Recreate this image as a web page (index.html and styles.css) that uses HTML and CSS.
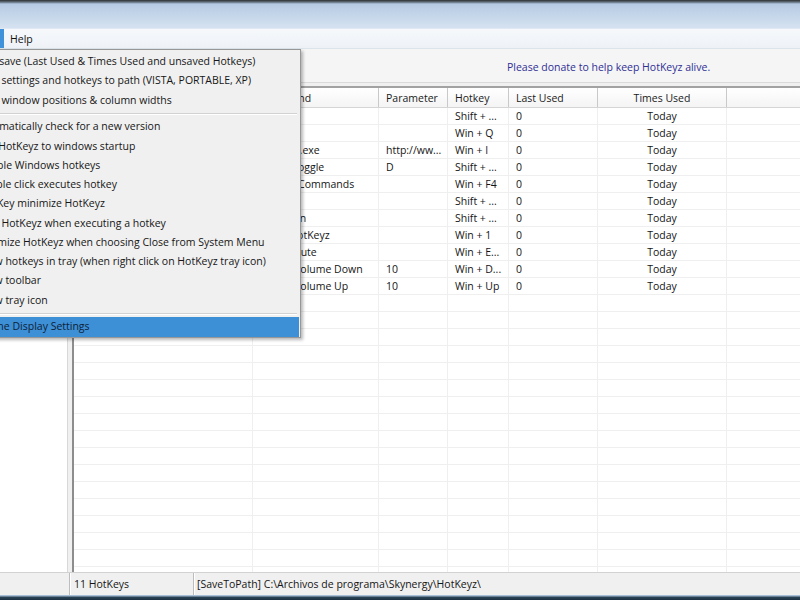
FILE: index.html
```html
<!DOCTYPE html>
<html>
<head>
<meta charset="utf-8">
<title>HotKeyz</title>
<link rel="stylesheet" href="styles.css">
</head>
<body>
<div class="screen">
  <div class="titlebar"></div>
  <div class="menubar">
    <span class="mb-item mb-open">Options</span>
    <span class="mb-item">Help</span>
  </div>
  <div class="toolbar"><span class="donate">Please donate to help keep HotKeyz alive.</span></div>
  <div class="workspace">
    <div class="leftpane"></div>
    <div class="splitter"></div>
    <div class="list">
      <div class="lv-head">
        <div class="hc">Name</div>
        <div class="hc">Command</div>
        <div class="hc">Parameter</div>
        <div class="hc">Hotkey</div>
        <div class="hc">Last Used</div>
        <div class="hc hc-center">Times Used</div>
        <div class="hc"></div>
      </div>
      <div class="lv-body">
        <div class="row"><div class="c">Google Search</div><div class="c">Run</div><div class="c"></div><div class="c">Shift + ...</div><div class="c">0</div><div class="c c-center">Today</div><div class="c"></div></div>
        <div class="row"><div class="c">Quit HotKeyz</div><div class="c">Exit</div><div class="c"></div><div class="c">Win + Q</div><div class="c">0</div><div class="c c-center">Today</div><div class="c"></div></div>
        <div class="row"><div class="c">Internet Explorer</div><div class="c">iexplore.exe</div><div class="c">http://ww...</div><div class="c">Win + I</div><div class="c">0</div><div class="c c-center">Today</div><div class="c"></div></div>
        <div class="row"><div class="c">Show Desktop</div><div class="c">Hover Toggle</div><div class="c">D</div><div class="c">Shift + ...</div><div class="c">0</div><div class="c c-center">Today</div><div class="c"></div></div>
        <div class="row"><div class="c">Close Window</div><div class="c">System Commands</div><div class="c"></div><div class="c">Win + F4</div><div class="c">0</div><div class="c c-center">Today</div><div class="c"></div></div>
        <div class="row"><div class="c">Minimize</div><div class="c">Min</div><div class="c"></div><div class="c">Shift + ...</div><div class="c">0</div><div class="c c-center">Today</div><div class="c"></div></div>
        <div class="row"><div class="c">Tray Icon</div><div class="c">Hide Icon</div><div class="c"></div><div class="c">Shift + ...</div><div class="c">0</div><div class="c c-center">Today</div><div class="c"></div></div>
        <div class="row"><div class="c">HotKeyz</div><div class="c">Show HotKeyz</div><div class="c"></div><div class="c">Win + 1</div><div class="c">0</div><div class="c c-center">Today</div><div class="c"></div></div>
        <div class="row"><div class="c">Mute</div><div class="c">Audio Mute</div><div class="c"></div><div class="c">Win + E...</div><div class="c">0</div><div class="c c-center">Today</div><div class="c"></div></div>
        <div class="row"><div class="c">Volume Down</div><div class="c">Sound Volume Down</div><div class="c">10</div><div class="c">Win + D...</div><div class="c">0</div><div class="c c-center">Today</div><div class="c"></div></div>
        <div class="row"><div class="c">Volume Up</div><div class="c">Sound Volume Up</div><div class="c">10</div><div class="c">Win + Up</div><div class="c">0</div><div class="c c-center">Today</div><div class="c"></div></div>
        <div class="row"><div class="c"></div><div class="c"></div><div class="c"></div><div class="c"></div><div class="c"></div><div class="c"></div><div class="c"></div></div>
        <div class="row"><div class="c"></div><div class="c"></div><div class="c"></div><div class="c"></div><div class="c"></div><div class="c"></div><div class="c"></div></div>
        <div class="row"><div class="c"></div><div class="c"></div><div class="c"></div><div class="c"></div><div class="c"></div><div class="c"></div><div class="c"></div></div>
        <div class="row"><div class="c"></div><div class="c"></div><div class="c"></div><div class="c"></div><div class="c"></div><div class="c"></div><div class="c"></div></div>
        <div class="row"><div class="c"></div><div class="c"></div><div class="c"></div><div class="c"></div><div class="c"></div><div class="c"></div><div class="c"></div></div>
        <div class="row"><div class="c"></div><div class="c"></div><div class="c"></div><div class="c"></div><div class="c"></div><div class="c"></div><div class="c"></div></div>
        <div class="row"><div class="c"></div><div class="c"></div><div class="c"></div><div class="c"></div><div class="c"></div><div class="c"></div><div class="c"></div></div>
        <div class="row"><div class="c"></div><div class="c"></div><div class="c"></div><div class="c"></div><div class="c"></div><div class="c"></div><div class="c"></div></div>
        <div class="row"><div class="c"></div><div class="c"></div><div class="c"></div><div class="c"></div><div class="c"></div><div class="c"></div><div class="c"></div></div>
        <div class="row"><div class="c"></div><div class="c"></div><div class="c"></div><div class="c"></div><div class="c"></div><div class="c"></div><div class="c"></div></div>
        <div class="row"><div class="c"></div><div class="c"></div><div class="c"></div><div class="c"></div><div class="c"></div><div class="c"></div><div class="c"></div></div>
        <div class="row"><div class="c"></div><div class="c"></div><div class="c"></div><div class="c"></div><div class="c"></div><div class="c"></div><div class="c"></div></div>
        <div class="row"><div class="c"></div><div class="c"></div><div class="c"></div><div class="c"></div><div class="c"></div><div class="c"></div><div class="c"></div></div>
        <div class="row"><div class="c"></div><div class="c"></div><div class="c"></div><div class="c"></div><div class="c"></div><div class="c"></div><div class="c"></div></div>
        <div class="row"><div class="c"></div><div class="c"></div><div class="c"></div><div class="c"></div><div class="c"></div><div class="c"></div><div class="c"></div></div>
        <div class="row"><div class="c"></div><div class="c"></div><div class="c"></div><div class="c"></div><div class="c"></div><div class="c"></div><div class="c"></div></div>
        <div class="row"><div class="c"></div><div class="c"></div><div class="c"></div><div class="c"></div><div class="c"></div><div class="c"></div><div class="c"></div></div>
      </div>
    </div>
  </div>
  <div class="statusbar">
    <div class="sb-panel sb-first"></div>
    <div class="sb-panel sb-count">11 HotKeys</div>
    <div class="sb-panel sb-path">[SaveToPath] C:\Archivos de programa\Skynergy\HotKeyz\</div>
  </div>
  <div class="taskbar"></div>

  <div class="dropdown">
    <div class="mi">Autosave (Last Used &amp; Times Used and unsaved Hotkeys)</div>
    <div class="mi">Save settings and hotkeys to path (VISTA, PORTABLE, XP)</div>
    <div class="mi">Save window positions &amp; column widths</div>
    <div class="msep"></div>
    <div class="mi">Automatically check for a new version</div>
    <div class="mi">Add HotKeyz to windows startup</div>
    <div class="mi">Disable Windows hotkeys</div>
    <div class="mi">Double click executes hotkey</div>
    <div class="mi">ESC Key minimize HotKeyz</div>
    <div class="mi">Hide HotKeyz when executing a hotkey</div>
    <div class="mi">Minimize HotKeyz when choosing Close from System Menu</div>
    <div class="mi">Show hotkeys in tray (when right click on HotKeyz tray icon)</div>
    <div class="mi">Show toolbar</div>
    <div class="mi">Show tray icon</div>
    <div class="msep msep-b"></div>
    <div class="mi mi-hot">Theme Display Settings</div>
  </div>
</div>
</body>
</html>
```
FILE: styles.css
```css
html, body {
  margin: 0;
  padding: 0;
  background: #f0f0f0;
}

body {
  font-family: "Open Sans", "Noto Sans", sans-serif;
  font-size: 10.5px;
  color: #111;
}

.screen {
  position: relative;
  width: 800px;
  height: 600px;
  overflow: hidden;
  display: flex;
  flex-direction: column;
}

.titlebar {
  height: 29px;
  flex: none;
  box-sizing: border-box;
  background: linear-gradient(#2e2e2e 0px, #5f6c7a 2px, #b5c9e2 4px, #c3d5e9 14px, #d5e2f0 28px);
  border-bottom: 1px solid #dfe8f3;
}

.menubar {
  height: 20px;
  flex: none;
  box-sizing: border-box;
  display: flex;
  align-items: stretch;
  background: linear-gradient(#f6f8fb, #eef2f7);
  border-bottom: 1px solid #dde3ea;
}

.mb-item {
  display: flex;
  align-items: center;
  padding: 0 6px;
  color: #111;
}

.mb-open {
  width: 54px;
  margin-left: -50px;
  box-sizing: border-box;
  background: #3f92d9;
  color: #fff;
}

.toolbar {
  height: 34px;
  flex: none;
  box-sizing: border-box;
  display: flex;
  align-items: center;
  padding: 3px 0 0 507px;
  background: #f5f5f5;
  border-bottom: 1px solid #dadada;
}

.donate {
  color: #2f2f96;
  white-space: nowrap;
}

.workspace {
  flex: 1;
  display: flex;
  padding-top: 3px;
  background: #f0f0f0;
  min-height: 0;
}

.leftpane {
  width: 67px;
  flex: none;
  background: #fff;
  border-right: 1px solid #d8d8d8;
}

.splitter {
  width: 4px;
  flex: none;
  background: #f0f0f0;
}

.list {
  flex: 1;
  min-width: 0;
  display: flex;
  flex-direction: column;
  background: #fff;
  border-left: 2px solid #8d8d8d;
  border-top: 2px solid #a2a2a2;
  overflow: hidden;
}

.lv-head,
.row {
  display: grid;
  grid-template-columns: 178px 126px 69px 61px 89px 129px 1fr;
  flex: none;
}

.lv-head {
  height: 20px;
  box-sizing: border-box;
  background: linear-gradient(#ffffff, #f4f4f4);
  border-bottom: 1px solid #d5d5d5;
}

.hc {
  display: flex;
  align-items: center;
  padding-left: 7px;
  border-left: 1px solid #c9c9c9;
  white-space: nowrap;
  overflow: hidden;
  color: #1a1a1a;
}

.hc:first-child {
  border-left: none;
  padding-left: 8px;
}

.hc-center {
  justify-content: center;
  padding-left: 0;
}

.lv-body {
  flex: 1;
  overflow: hidden;
}

.row {
  height: 17px;
  box-sizing: border-box;
  border-bottom: 1px solid #efefef;
}

.c {
  padding-left: 7px;
  line-height: 16px;
  border-left: 1px solid #efefef;
  white-space: nowrap;
  overflow: hidden;
  color: #151515;
}

.c:first-child {
  border-left: none;
  padding-left: 8px;
}

.c-center {
  text-align: center;
  padding-left: 0;
}

.statusbar {
  height: 23px;
  flex: none;
  box-sizing: border-box;
  display: flex;
  background: #f0f0f0;
  border-top: 1px solid #d2d2d2;
}

.sb-panel {
  display: flex;
  align-items: center;
  white-space: nowrap;
  color: #151515;
}

.sb-first {
  width: 69px;
  flex: none;
}

.sb-count {
  width: 119px;
  flex: none;
  padding-left: 4px;
  border-left: 1px solid #bdbdbd;
  box-shadow: inset 1px 0 0 #ffffff;
}

.sb-path {
  flex: 1;
  padding-left: 3px;
  border-left: 1px solid #bdbdbd;
  box-shadow: inset 1px 0 0 #ffffff;
}

.taskbar {
  height: 5px;
  flex: none;
  background: linear-gradient(#a7bfd5 0px, #a7bfd5 1px, #2a4457 2px, #1b3142 5px);
}

/* dropdown menu overlay */
.dropdown {
  position: absolute;
  top: 49px;
  left: -50px;
  width: 351px;
  box-sizing: border-box;
  padding: 2px 1px 0 1px;
  background: #f0f0f0;
  border: 1px solid #979797;
  box-shadow: 2px 2px 3px rgba(0, 0, 0, 0.28);
}

.mi {
  height: 19.25px;
  line-height: 19.25px;
  padding-left: 24px;
  white-space: nowrap;
  color: #161616;
}

.msep {
  height: 7.65px;
  display: flex;
  align-items: center;
  margin: 0 2px 0 24px;
}

.msep::before {
  content: "";
  flex: 1;
  height: 0;
  border-top: 1px solid #d2d2d2;
  border-bottom: 1px solid #ffffff;
}

.msep-b {
  height: 7.5px;
}

.mi-hot {
  background: #3d8fd6;
  color: #0d2236;
}
```
